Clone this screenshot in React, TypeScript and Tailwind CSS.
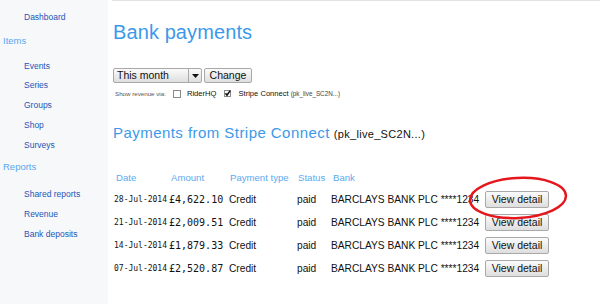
import React from "react";

const rows = [
  { date: "28-Jul-2014", amount: "£4,622.10" },
  { date: "21-Jul-2014", amount: "£2,009.51" },
  { date: "14-Jul-2014", amount: "£1,879.33" },
  { date: "07-Jul-2014", amount: "£2,520.87" },
];

function SideLink({ children }: { children: React.ReactNode }) {
  return (
    <div className="h-[19.75px] leading-[19.75px] pl-[24px] text-[8.5px] text-[#2356b8] whitespace-nowrap">
      {children}
    </div>
  );
}

function Btn({ children, className = "" }: { children: React.ReactNode; className?: string }) {
  return (
    <div
      className={
        "flex items-center justify-center border border-[#a9a9a9] rounded-[2px] bg-gradient-to-b from-[#fbfbfb] to-[#dedede] text-[#111] " +
        className
      }
    >
      {children}
    </div>
  );
}

export default function App() {
  return (
    <div className="relative w-[600px] h-[304px] flex bg-white overflow-hidden font-['Liberation_Sans',Arial,sans-serif]">
      {/* Sidebar */}
      <div className="w-[108px] h-full bg-[#f7f8f9] flex flex-col shrink-0">
        <div className="mt-[7px] h-[20px] leading-[20px] pl-[24px] text-[8.5px] text-[#2356b8]">Dashboard</div>
        <div className="h-[29.5px] leading-[28px] pl-[3px] text-[9.5px] text-[#58a7ef]">Items</div>
        <SideLink>Events</SideLink>
        <SideLink>Series</SideLink>
        <SideLink>Groups</SideLink>
        <SideLink>Shop</SideLink>
        <SideLink>Surveys</SideLink>
        <div className="h-[24.5px] leading-[24.5px] pl-[3px] text-[9.5px] text-[#58a7ef]">Reports</div>
        <div className="mt-[5.35px]" />
        <SideLink>Shared reports</SideLink>
        <SideLink>Revenue</SideLink>
        <SideLink>Bank deposits</SideLink>
      </div>

      {/* Main */}
      <div className="flex-1 ml-[4px] pl-[1px] border-t border-[#e3e3e3] flex flex-col">
        <div className="mt-[20px] h-[23px] leading-[23px] text-[20px] text-[#3c99ea] tracking-[0.1px]">
          Bank payments
        </div>

        {/* Select row */}
        <div className="mt-[24px] h-[15px] flex">
          <div className="w-[89px] h-[15px] flex border border-[#a9a9a9] rounded-[2px] bg-gradient-to-b from-[#fbfbfb] to-[#dedede]">
            <div className="flex-1 pl-[3px] text-[10.5px] leading-[13px] text-[#111]">This month</div>
            <div className="w-[13px] border-l border-[#a9a9a9] flex items-center justify-center">
              <svg width="7" height="4" viewBox="0 0 7 4">
                <path d="M0 0 L7 0 L3.5 4 Z" fill="#111" />
              </svg>
            </div>
          </div>
          <Btn className="ml-[2px] w-[48px] h-[15px] text-[10.5px]">Change</Btn>
        </div>

        {/* Show revenue via */}
        <div className="mt-[5px] h-[11px] flex items-center whitespace-nowrap">
          <span className="text-[6.2px] text-[#555] ml-[2px]">Show revenue via:</span>
          <span className="ml-[7px] w-[8px] h-[8px] border border-[#8a8a8a] bg-white inline-block" />
          <span className="ml-[6px] text-[7.6px] text-[#111]">RiderHQ</span>
          <span className="ml-[8px] w-[7px] h-[7px] inline-block">
            <svg width="7" height="7" viewBox="0 0 7 7">
              <rect x="0.5" y="0.5" width="6" height="6" fill="#fff" stroke="#8a8a8a" />
              <path d="M1.5 3.3 L3 5.2 L6.2 0.6" stroke="#111" strokeWidth="1.6" fill="none" />
            </svg>
          </span>
          <span className="ml-[7px] text-[7.6px] text-[#111]">Stripe Connect</span>
          <span className="ml-[2px] text-[6.3px] text-[#444]">(pk_live_SC2N...)</span>
        </div>

        {/* Section title */}
        <div className="mt-[25px] h-[18px] leading-[18px] flex items-baseline whitespace-nowrap">
          <span className="text-[15px] text-[#3c99ea] tracking-[0.45px]">Payments from Stripe Connect</span>
          <span className="ml-[4px] text-[11px] text-[#111] tracking-[0.3px]">(pk_live_SC2N...)</span>
        </div>

        {/* Table */}
        <div className="mt-[26px] flex flex-col">
          <div className="h-[20px] flex items-center text-[9.6px] text-[#5aaaf0] whitespace-nowrap">
            <div className="w-[56px] pl-[3px]">Date</div>
            <div className="w-[60px] pl-[2px]">Amount</div>
            <div className="w-[68px] pl-[1px]">Payment type</div>
            <div className="w-[34px] pl-[1px]">Status</div>
            <div className="pl-[2px]">Bank</div>
          </div>
          {rows.map((r) => (
            <div key={r.date} className="h-[23px] flex items-center whitespace-nowrap text-[#111]">
              <div className="w-[56px] pl-[1px] text-[8px] font-['DejaVu_Sans_Mono',monospace]">{r.date}</div>
              <div className="w-[60px] text-[10px] font-['DejaVu_Sans_Mono',monospace]">{r.amount}</div>
              <div className="w-[68px] text-[10.2px]">Credit</div>
              <div className="w-[34px] text-[10.2px]">paid</div>
              <div className="w-[154px] text-[10.2px]">BARCLAYS BANK PLC ****1234</div>
              <Btn className="w-[64px] h-[17px] text-[10.5px]">View detail</Btn>
            </div>
          ))}
        </div>
      </div>

      {/* Red annotation ellipse */}
      <svg className="absolute left-[466px] top-[172px]" width="104" height="54" viewBox="0 0 104 54">
        <ellipse
          cx="52"
          cy="26"
          rx="48"
          ry="20"
          fill="none"
          stroke="#e5161c"
          strokeWidth="2.5"
          transform="rotate(-3 52 26)"
        />
      </svg>
    </div>
  );
}
